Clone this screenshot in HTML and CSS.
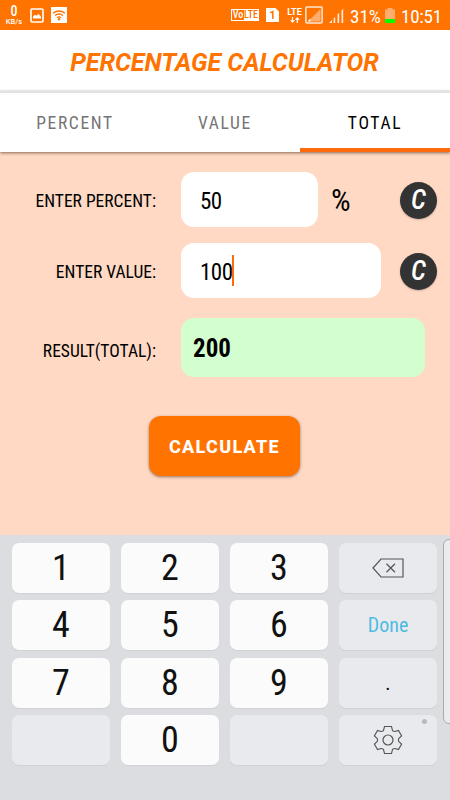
FILE: index.html
```html
<!DOCTYPE html>
<html lang="en">
<head>
<meta charset="utf-8">
<title>Percentage Calculator</title>
<link rel="stylesheet" href="styles.css">
</head>
<body>
<div class="status">
  <div class="net"><b>0</b><span>KB/s</span></div>
  <svg class="pic" width="14" height="15" viewBox="0 0 14 15"><rect x="1" y="1" width="12" height="13" rx="1" fill="none" stroke="#fff" stroke-width="1.6"/><path d="M3 10.500V8.500L5 6.800L6.500 7.800L8.500 6L11 8.500V10.500Z" fill="#fff"/></svg>
  <svg class="wifi" width="16" height="16" viewBox="0 0 16 16"><path fill="#fff" d="M0 0H16V16H0Z"/><path d="M2 6.200Q8 1.800 14 6.200M4 8.500Q8 5.600 12 8.500M6 10.600Q8 9.200 10 10.600" fill="none" stroke="#ff7300" stroke-width="1.400"/><circle cx="8" cy="12.200" r="1.200" fill="#ff7300"/></svg>
  <div class="volte"><i>Vo</i><b>LTE</b></div>
  <svg class="sim" width="13" height="14" viewBox="0 0 13 14"><path fill="#fff" d="M0 0H9.500L13 3.500V14H0Z"/><path d="M4.200 4.800L6.800 3.500V11" fill="none" stroke="#ff7300" stroke-width="1.500"/></svg>
  <div class="lte"><b>LTE</b><svg width="10" height="6" viewBox="0 0 10 6"><path fill="#fff" d="M2.500 6L0 3.300H1.900V0H3.100V3.300H5ZM7.300 0L9.800 2.700H7.900V6H6.700V2.700H4.800Z"/></svg></div>
  <svg class="sig1" width="18" height="18" viewBox="0 0 18 18"><path fill="#ffac6c" d="M3 15.500L15.500 3V15.500Z"/><rect x=".9" y=".9" width="16.200" height="16.200" rx="1" fill="none" stroke="#ffe7d5" stroke-width="1.500"/><path fill="#fff" d="M2.500 15.500L5.500 12.500V15.500Z"/></svg>
  <svg class="sig2" width="15" height="15" viewBox="0 0 15 15"><path fill="#ffe9dc" d="M0 15L3 12V15ZM4.600 10.500L6.200 9V15H4.600ZM8.500 6.500L10.200 4.800V15H8.500ZM12.500 2.500L14.200.8V15H12.500Z"/></svg>
  <span class="pct">31%</span>
  <svg class="batt" width="10" height="15" viewBox="0 0 10 15"><path fill="#ffac6c" d="M2.500 0H7.500V1.500H10V11H0V1.500H2.500Z"/><path fill="#0f0" d="M0 11H10V15H0Z"/></svg>
  <span class="clock">10:51</span>
</div>
<h1 class="title"><span>PERCENTAGE CALCULATOR</span></h1>
<nav class="tabs">
  <div class="tab"><span>PERCENT</span></div>
  <div class="tab"><span>VALUE</span></div>
  <div class="tab active"><span>TOTAL</span></div>
</nav>
<main class="form">
  <div class="row">
    <label class="label">ENTER PERCENT:</label>
    <div class="field short"><span>50</span></div>
    <span class="unit">%</span>
    <button class="clear"><span>C</span></button>
  </div>
  <div class="row">
    <label class="label">ENTER VALUE:</label>
    <div class="field"><span>100</span><i class="caret"></i></div>
    <button class="clear"><span>C</span></button>
  </div>
  <div class="row last">
    <label class="label">RESULT(TOTAL):</label>
    <div class="field result"><span>200</span></div>
  </div>
  <button class="calc"><span>CALCULATE</span></button>
</main>
<section class="keyboard">
  <div class="keys">
    <div class="key">1</div><div class="key">2</div><div class="key">3</div>
    <div class="key soft"><svg width="32" height="20" viewBox="0 0 32 20"><path d="M1 10L9 1H31V19H9ZM14.500 5.800L23 14.200M23 5.800L14.500 14.200" fill="none" stroke="#555" stroke-width="1.200"/></svg></div>
    <div class="key">4</div><div class="key">5</div><div class="key">6</div>
    <div class="key soft done">Done</div>
    <div class="key">7</div><div class="key">8</div><div class="key">9</div>
    <div class="key soft dot">.</div>
    <div class="key soft"></div><div class="key">0</div><div class="key soft"></div>
    <div class="key soft"><svg width="30" height="30" viewBox="-15 -15 30 30"><path d="M-3.500 -13.500H3.500L4.500 -9.500Q6 -8.300 7 -8.500L10.500 -9.600L13.600 -4L10.700 -1.500Q10.200 0 10.700 1.500L13.600 4L10.500 9.600L7 8.500Q6 8.300 4.500 9.500L3.500 13.500H-3.500L-4.500 9.500Q-6 8.300 -7 8.500L-10.500 9.600L-13.600 4L-10.700 1.500Q-10.200 0 -10.700 -1.500L-13.600 -4L-10.500 -9.600L-7 -8.500Q-6 -8.300 -4.500 -9.500Z" fill="none" stroke="#555" stroke-width="1.100"/><circle r="5" fill="none" stroke="#555" stroke-width="1.200"/></svg><i class="badge"></i></div>
  </div>
  <i class="handle"></i>
</section>
</body>
</html>
```
FILE: styles.css
```css
* { box-sizing: border-box; }
body { margin: 0; width: 450px; height: 800px; overflow: hidden; display: flex; flex-direction: column; background: #ffd9c4; font-family: Roboto, "Liberation Sans", sans-serif; font-stretch: 75%; color: #000; }
button { border: 0; padding: 0; font: inherit; font-stretch: 75%; }
span { white-space: nowrap; }
svg { display: block; flex: none; }
.status { height: 30px; flex: none; background: #ff7300; color: #fff; display: flex; align-items: center; padding-left: 5px; }
.net { width: 18px; display: flex; flex-direction: column; align-items: center; font-size: 7.500px; font-weight: 500; font-stretch: 100%; line-height: 8px; }
.net b { font-size: 14px; line-height: 14px; font-weight: 500; font-stretch: 75%; }
.pic { margin-left: 7px; }
.wifi { margin-left: 7px; }
.volte { margin-left: 164px; width: 28px; height: 12px; border: 1px solid #fff; display: flex; font-size: 10px; line-height: 10px; font-weight: 500; }
.volte i { width: 12px; font-style: normal; text-align: center; }
.volte b { flex: 1; background: #fff; color: #ff7300; text-align: center; font-weight: 500; }
.sim { margin-left: 7px; }
.lte { margin-left: 7px; width: 17px; display: flex; flex-direction: column; align-items: center; font-size: 9px; line-height: 8px; font-stretch: 100%; }
.lte svg { margin-top: 1px; }
.sig1 { margin-left: 2px; }
.sig2 { margin-left: 6px; }
.pct { margin-left: 6px; width: 30px; font-size: 19px; padding-top: 2px; }
.batt { margin-left: 5px; }
.clock { margin-left: 6px; font-size: 19px; letter-spacing: -.2px; padding-top: 2px; }
.title { margin: 0; height: 61px; flex: none; background: #fff; display: flex; align-items: center; justify-content: center; color: #ff7300; font-size: 25px; font-style: italic; font-weight: 700; font-stretch: 100%; padding: 3px 1px 0 0; }
.tabs { height: 61px; flex: none; display: flex; background: #fff; border-top: 2px solid #e4e2e1; box-shadow: 0 1px 3px rgba(60, 30, 10, .6); position: relative; }
.tab { flex: 1; display: flex; align-items: center; justify-content: center; font-size: 17.500px; letter-spacing: 1.650px; color: #757575; padding-top: 4px; border-bottom: 4px solid transparent; }
.tab.active { color: #000; border-color: #ff6a0a; }
.form { height: 383px; flex: none; padding-top: 20px; display: flex; flex-direction: column; align-items: center; }
.row { width: 450px; height: 56px; display: flex; align-items: center; margin-bottom: 15px; position: relative; }
.row.last { height: 59px; margin: 4px 0 39px; }
.label { width: 156px; text-align: right; font-size: 17.500px; white-space: nowrap; padding-top: 2px; }
.last .label { padding-top: 7px; }
.field { margin: 0 0 1px 25px; width: 200px; height: 55px; border-radius: 13px; background: #fff; padding: 4px 0 0 19px; display: flex; align-items: center; font-size: 23px; letter-spacing: -.5px; }
.field.short { width: 137px; }
.field.result { width: 244px; height: 59px; margin-bottom: 0; background: #d3ffd0; padding: 1px 0 0 12px; font-size: 25px; font-weight: 700; letter-spacing: 0; }
.caret { width: 2px; height: 31px; background: #ff6a0a; margin: -4px 0 0 -1px; }
.unit { margin-left: 13px; width: 49px; font-size: 31px; padding-top: 0; }
.clear { margin-left: auto; margin-right: 13px; width: 37px; height: 37px; border-radius: 50%; background: #333; color: #fff; font-size: 27px; font-style: italic; font-weight: 500; display: flex; align-items: center; justify-content: center; box-shadow: 0 1px 2px rgba(0, 0, 0, .2); }
.calc { width: 151px; height: 60px; margin-right: 1px; border-radius: 12px; background: #ff7300; color: #fff; font-size: 18px; font-weight: 800; letter-spacing: 1.300px; font-stretch: 100%; box-shadow: 0 1px 3px rgba(60, 30, 10, .55); }
.keyboard { height: 265px; flex: none; background: #dcdde1; padding: 8px 0 0 12px; position: relative; overflow: hidden; }
.keys { width: 425px; height: 222px; display: grid; grid-template-columns: repeat(4, 1fr); grid-template-rows: repeat(4, 1fr); gap: 7.500px 11px; }
.key { position: relative; display: flex; align-items: center; justify-content: center; border-radius: 7px; background: #fbfbfb; box-shadow: 0 1px 0 #d0d1d4; font-size: 36px; color: #111; }
.key.soft { background: #e9eaee; }
.key.done { font-size: 20px; color: #4dbbe3; }
.key.dot { font-size: 20px; }
.badge { position: absolute; top: 4px; right: 10px; width: 5px; height: 5px; border-radius: 50%; background: #b9b9bb; }
.handle { position: absolute; left: 443px; top: 4px; width: 12px; height: 185px; background: #ececee; border: 1px solid #aaa; border-radius: 6px; }
```
